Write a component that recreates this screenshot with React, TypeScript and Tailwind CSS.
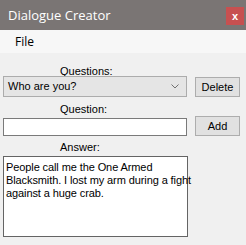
import React from 'react';

const ui = { fontFamily: '"Liberation Sans", Arial, sans-serif' };
const segoe = { fontFamily: '"Open Sans", "Noto Sans", sans-serif' };

const App: React.FC = () => {
  return (
    <div className="w-[246px] h-[245px] bg-[#f0f0f0] flex flex-col overflow-hidden" style={ui}>
      {/* title bar */}
      <div className="h-[30px] bg-[#7a7574] flex items-start justify-between shrink-0">
        <span className="text-white text-[13px] leading-none pl-[8px] pt-[9px]" style={segoe}>
          Dialogue Creator
        </span>
        <div className="mt-[7px] mr-[2px] w-[18px] h-[18px] bg-[#c75050] flex items-center justify-center text-white text-[11px] font-bold leading-none">
          x
        </div>
      </div>

      {/* menu bar */}
      <div className="h-[23px] bg-[#f7f7f7] flex items-center shrink-0">
        <span className="text-[12px] text-black pl-[15px]" style={segoe}>
          File
        </span>
      </div>

      {/* form */}
      <div className="flex flex-col pl-[3px] pt-[13px] text-[11px] text-black leading-none">
        <div className="pl-[57px] h-[10px]">Questions:</div>
        <div className="flex items-start gap-[8px]">
          <div className="w-[184px] h-[21px] bg-[#e5e5e5] border border-[#acacac] flex items-center justify-between pl-[4px] pr-[7px]">
            <span>Who are you?</span>
            <svg width="8" height="5" viewBox="0 0 8 5">
              <path d="M0.5 0.5 L4 4 L7.5 0.5" fill="none" stroke="#707070" strokeWidth="1" />
            </svg>
          </div>
          <div className="mt-[1px] w-[45px] h-[20px] bg-[#e1e1e1] border border-[#adadad] flex items-center justify-center">
            Delete
          </div>
        </div>

        <div className="pl-[57px] h-[9px] mt-[7px]">Question:</div>
        <div className="flex items-end gap-[8px] mt-[3px]">
          <div className="w-[184px] h-[18px] bg-white border border-[#7a7a7a]" />
          <div className="w-[45px] h-[20px] bg-[#e1e1e1] border border-[#adadad] flex items-center justify-center">
            Add
          </div>
        </div>

        <div className="pl-[57px] h-[9px] mt-[6px]">Answer:</div>
        <div className="w-[185px] h-[81px] bg-white border border-[#646464] mt-[5px] px-[2px] pt-[4px] leading-[13px] whitespace-nowrap tracking-[-0.1px]">
          <div>People call me the One Armed</div>
          <div>Blacksmith. I lost my arm during a fight</div>
          <div>against a huge crab.</div>
        </div>
      </div>
    </div>
  );
};

export default App;
